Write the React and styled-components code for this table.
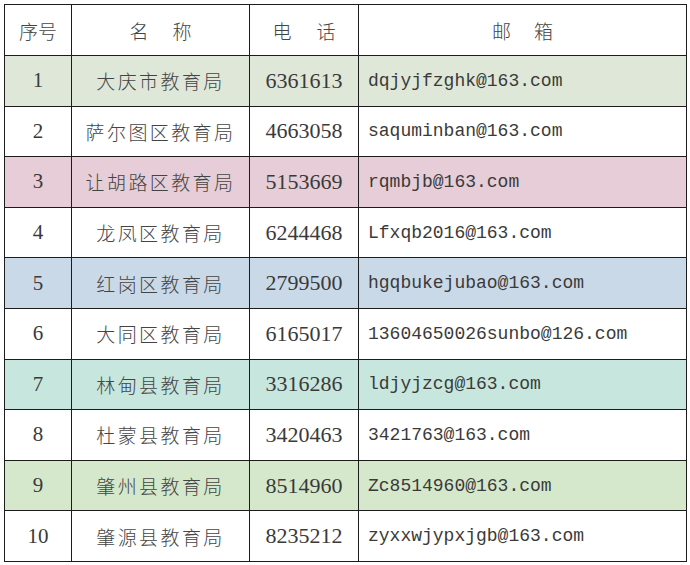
import styled, { createGlobalStyle } from 'styled-components'

const rows = [
    { no: 1, name: '大庆市教育局', tel: '6361613', mail: 'dqjyjfzghk@163.com', bg: '#dfe8d8' },
    { no: 2, name: '萨尔图区教育局', tel: '4663058', mail: 'saquminban@163.com' },
    { no: 3, name: '让胡路区教育局', tel: '5153669', mail: 'rqmbjb@163.com', bg: '#e6cdd7' },
    { no: 4, name: '龙凤区教育局', tel: '6244468', mail: 'Lfxqb2016@163.com' },
    { no: 5, name: '红岗区教育局', tel: '2799500', mail: 'hgqbukejubao@163.com', bg: '#cad9e8' },
    { no: 6, name: '大同区教育局', tel: '6165017', mail: '13604650026sunbo@126.com' },
    { no: 7, name: '林甸县教育局', tel: '3316286', mail: 'ldjyjzcg@163.com', bg: '#c7e6dd' },
    { no: 8, name: '杜蒙县教育局', tel: '3420463', mail: '3421763@163.com' },
    { no: 9, name: '肇州县教育局', tel: '8514960', mail: 'Zc8514960@163.com', bg: '#d5e8cb' },
    { no: 10, name: '肇源县教育局', tel: '8235212', mail: 'zyxxwjypxjgb@163.com' },
]

const GlobalStyle = createGlobalStyle`
    body {
        margin: 0;
        background: #fff;
        font-family: "Liberation Serif", "Noto Sans CJK SC", serif;
    }
`

const Wrapper = styled.div`
    width: 690px;
    height: 565px;
    padding: 4px;
    box-sizing: border-box;
`

const Table = styled.table`
    width: 682px;
    border-collapse: collapse;
    table-layout: fixed;
    color: #3a3a3a;
`

const Row = styled.tr`
    height: ${(p) => p.$head ? '51px' : '50.6px'};
    background: ${(p) => p.$bg || '#fff'};
`

const HeadCell = styled.th`
    border: 1.5px solid #1c1c1c;
    font-family: "Noto Sans CJK SC", sans-serif;
    font-weight: 300;
    font-size: 19px;
    color: #444;
    padding: 0;
`

const Gap = styled.span`
    display: inline-block;
    width: ${(p) => p.$w}px;
`

const Cell = styled.td`
    border: 1.5px solid #1c1c1c;
    padding: ${(p) => p.$left ? '0 0 0 9px' : '0'};
    text-align: ${(p) => p.$left ? 'left' : 'center'};
    white-space: nowrap;
`

const Num = styled(Cell)`
    font-family: "Liberation Serif", serif;
    font-size: ${(p) => p.$size || 21}px;
`

const Name = styled(Cell)`
    font-family: "Noto Sans CJK SC", sans-serif;
    font-weight: 300;
    font-size: 19px;
    letter-spacing: 2.4px;
    color: #444;
`

const Mail = styled(Cell)`
    font-family: "Liberation Mono", monospace;
    font-size: 18px;
`

function App() {
    return (
        <Wrapper>
            <GlobalStyle />
            <Table>
                <colgroup>
                    <col style={{ width: 67 }} />
                    <col style={{ width: 178 }} />
                    <col style={{ width: 109 }} />
                    <col style={{ width: 328 }} />
                </colgroup>
                <thead>
                    <Row $head>
                        <HeadCell>序号</HeadCell>
                        <HeadCell>名<Gap $w={24} />称</HeadCell>
                        <HeadCell>电<Gap $w={25} />话</HeadCell>
                        <HeadCell>邮<Gap $w={23} />箱</HeadCell>
                    </Row>
                </thead>
                <tbody>
                    {rows.map((r) => (
                        <Row key={r.no} $bg={r.bg}>
                            <Num>{r.no}</Num>
                            <Name>{r.name}</Name>
                            <Num $size={22}>{r.tel}</Num>
                            <Mail $left>{r.mail}</Mail>
                        </Row>
                    ))}
                </tbody>
            </Table>
        </Wrapper>
    )
}

export default App
